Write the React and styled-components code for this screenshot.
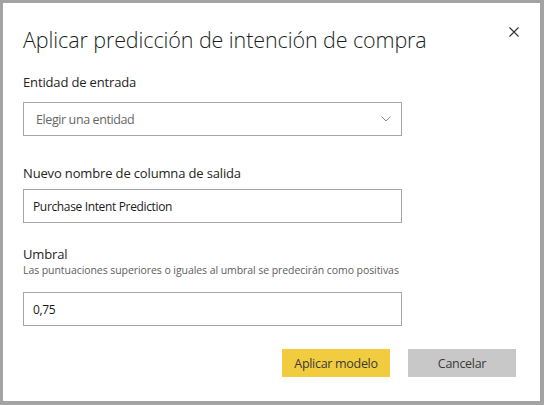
import styled, { createGlobalStyle } from "styled-components";

const GlobalStyle = createGlobalStyle`
    html, body {
        margin: 0;
        padding: 0;
        background: #ffffff;
    }
    * {
        box-sizing: border-box;
    }
`;

const Dialog = styled.div`
    width: 544px;
    height: 405px;
    background: #ffffff;
    border: 3px solid #a3a3a3;
    border-right-width: 4px;
    border-bottom-width: 4px;
    padding: 23px 24px 0 20px;
    display: flex;
    flex-direction: column;
    font-family: "Open Sans", "Noto Sans", sans-serif;
    color: #252423;
`;

const Header = styled.div`
    display: flex;
    justify-content: space-between;
    align-items: flex-start;
`;

const Title = styled.h1`
    margin: 0;
    font-size: 21.5px;
    line-height: 28px;
    font-weight: 300;
    letter-spacing: -0.1px;
    color: #201f1e;
`;

const CloseButton = styled.button`
    border: none;
    background: none;
    padding: 0;
    margin: 1px -3px 0 0;
    width: 10px;
    height: 10px;
    display: flex;
    cursor: pointer;

    & svg {
        display: block;
    }
`;

const Field = styled.div`
    display: flex;
    flex-direction: column;
    margin-top: ${(p) => p.$top}px;
`;

const Label = styled.label`
    font-size: 13px;
    line-height: 18px;
    letter-spacing: -0.15px;
    color: #252423;
`;

const Hint = styled.div`
    font-size: 10.5px;
    line-height: 14px;
    letter-spacing: -0.07px;
    color: #605e5c;
`;

const Box = styled.div`
    width: 379px;
    height: 34px;
    margin-top: ${(p) => p.$gap}px;
    border: 1px solid #a6a6a6;
    background: #ffffff;
    display: flex;
    align-items: center;
    justify-content: space-between;
    padding: 0 10px 0 12px;
`;

const Placeholder = styled.span`
    font-size: 12.5px;
    letter-spacing: -0.4px;
    color: #666666;
`;

const Value = styled.span`
    font-size: 12px;
    letter-spacing: -0.35px;
    color: #1b1a19;
    margin-left: -3px;
`;

const Footer = styled.div`
    display: flex;
    justify-content: flex-end;
    gap: 18px;
    margin-top: 23px;
`;

const Button = styled.button`
    width: 108px;
    height: 28px;
    border: none;
    padding: 0;
    font-family: inherit;
    font-size: 12.5px;
    letter-spacing: -0.3px;
    color: #3b3a39;
    background: ${(p) => (p.$primary ? "#f2cc3f" : "#c8c8c8")};
    cursor: pointer;
`;

function Chevron() {
    return (
        <svg width="10" height="6" viewBox="0 0 10 6">
            <path d="M0.5 0.5 L5 5 L9.5 0.5" fill="none" stroke="#8a8a8a" strokeWidth="1" />
        </svg>
    );
}

function CloseIcon() {
    return (
        <svg width="10" height="10" viewBox="0 0 10 10">
            <path d="M0.5 0.5 L9.5 9.5 M9.5 0.5 L0.5 9.5" stroke="#323130" strokeWidth="1.1" />
        </svg>
    );
}

export default function App() {
    return (
        <>
            <GlobalStyle />
            <Dialog>
                <Header>
                    <Title>Aplicar predicción de intención de compra</Title>
                    <CloseButton aria-label="Cerrar">
                        <CloseIcon />
                    </CloseButton>
                </Header>

                <Field $top={19}>
                    <Label>Entidad de entrada</Label>
                    <Box $gap={11}>
                        <Placeholder>Elegir una entidad</Placeholder>
                        <Chevron />
                    </Box>
                </Field>

                <Field $top={28}>
                    <Label>Nuevo nombre de columna de salida</Label>
                    <Box $gap={7}>
                        <Value>Purchase Intent Prediction</Value>
                    </Box>
                </Field>

                <Field $top={22}>
                    <Label>Umbral</Label>
                    <Hint>Las puntuaciones superiores o iguales al umbral se predecirán como positivas</Hint>
                    <Box $gap={15}>
                        <Value>0,75</Value>
                    </Box>
                </Field>

                <Footer>
                    <Button $primary>Aplicar modelo</Button>
                    <Button>Cancelar</Button>
                </Footer>
            </Dialog>
        </>
    );
}
